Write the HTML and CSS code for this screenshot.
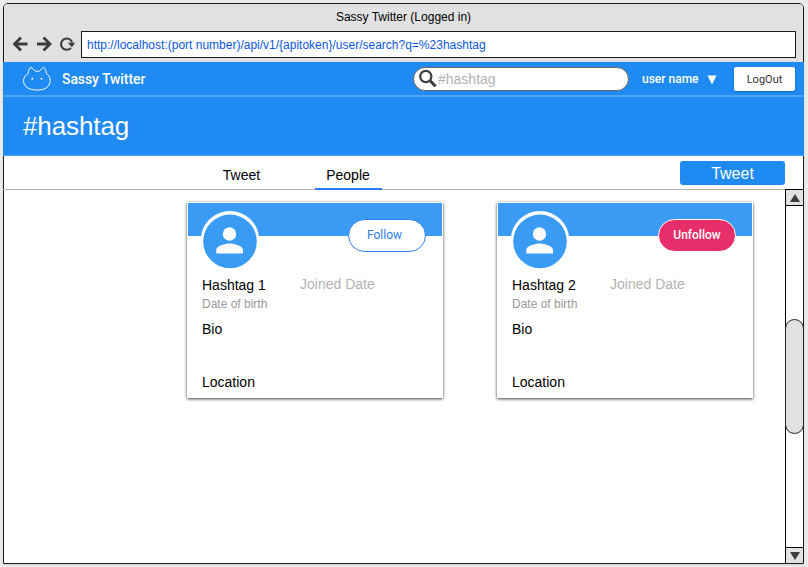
FILE: index.html
```html
<!DOCTYPE html>
<html lang="en">
<head>
<meta charset="utf-8">
<title>Sassy Twitter</title>
<link rel="stylesheet" href="styles.css">
</head>
<body>
<div class="window">
  <div class="chrome">
    <div class="title">Sassy Twitter (Logged in)</div>
    <div class="toolbar">
      <svg class="nav" width="66" height="20" viewBox="0 0 66 20" fill="none" stroke="#3d3d3d">
        <path d="M2 10H15.500M9 3.500L2.500 10l6.500 6.500" stroke-width="2.800"/>
        <path d="M25 10h13.500M31.500 3.500L38 10l-6.500 6.500" stroke-width="2.800"/>
        <path d="M59 13.900A5.700 5.700 0 1 1 60.200 8.500" stroke-width="2"/>
        <path d="M55.800 8.800h7.400l-3.300 4.400z" fill="#3d3d3d" stroke="none"/>
      </svg>
      <div class="address"><span>http://localhost:(port number)/api/v1/{apitoken}/user/search?q=%23hashtag</span></div>
    </div>
  </div>
  <header class="header">
    <svg class="logo" width="30" height="26" viewBox="0 0 30 26">
      <path d="M6.200 7.500C6.500 4.500 7.600 1.600 9 1.500c1.400 0 2.700 2.500 4.200 3.700h4.300c1.500-1.200 2.700-3.700 4.100-3.700 1.400.1 2.400 2.900 2.700 6C27 9.200 28.200 11.800 28.200 14.500c0 6.300-5.200 9.600-13.100 9.600S1.500 20.800 1.500 14.500c0-2.700 2-5.300 4.700-7z" fill="none" stroke="#fff" stroke-width="1"/>
      <circle cx="10.300" cy="12.700" r="1" fill="#fff"/><circle cx="19.500" cy="12.700" r="1" fill="#fff"/>
    </svg>
    <span class="brand">Sassy Twitter</span>
    <div class="search">
      <svg width="20" height="20" viewBox="0 0 20 20" fill="none" stroke="#3d3d3d"><circle cx="7.800" cy="7.500" r="5.600" stroke-width="2.200"/><path d="M11.800 11.500l5.800 5.800" stroke-width="3"/></svg>
      <span class="query">#hashtag</span>
    </div>
    <span class="user">user name</span>
    <svg class="caret" width="10" height="10" viewBox="0 0 10 10"><path d="M.5 .5h9L5 9.500z" fill="#fff"/></svg>
    <button class="logout">LogOut</button>
  </header>
  <div class="banner"><h1>#hashtag</h1></div>
  <nav class="tabs">
    <a class="tab tab-first">Tweet</a>
    <a class="tab tab-active">People</a>
    <button class="tweet">Tweet</button>
  </nav>
  <div class="content">
    <main class="cards">
      <article class="card">
        <div class="cover">
          <svg class="avatar" width="58" height="59" viewBox="0 0 58 59"><circle cx="29" cy="29.300" r="29.300" fill="#fff"/><circle cx="29" cy="30.400" r="26.800" fill="#3a9bf4"/><circle cx="28.500" cy="23" r="6.700" fill="#fafafa"/><path d="M15.200 42.500v-3.200c0-4.500 8.900-6.700 13.400-6.700s13.400 2.200 13.400 6.700v3.200z" fill="#fafafa"/></svg>
          <button class="follow">Follow</button>
        </div>
        <div class="names"><span class="name">Hashtag 1</span><span class="joined">Joined Date</span></div>
        <div class="birth">Date of birth</div>
        <div class="bio">Bio</div>
        <div class="location">Location</div>
      </article>
      <article class="card">
        <div class="cover">
          <svg class="avatar" width="58" height="59" viewBox="0 0 58 59"><circle cx="29" cy="29.300" r="29.300" fill="#fff"/><circle cx="29" cy="30.400" r="26.800" fill="#3a9bf4"/><circle cx="28.500" cy="23" r="6.700" fill="#fafafa"/><path d="M15.200 42.500v-3.200c0-4.500 8.900-6.700 13.400-6.700s13.400 2.200 13.400 6.700v3.200z" fill="#fafafa"/></svg>
          <button class="follow unfollow">Unfollow</button>
        </div>
        <div class="names"><span class="name">Hashtag 2</span><span class="joined">Joined Date</span></div>
        <div class="birth">Date of birth</div>
        <div class="bio">Bio</div>
        <div class="location">Location</div>
      </article>
    </main>
    <div class="scrollbar">
      <div class="arrow arrow-up"><svg width="10" height="8" viewBox="0 0 10 8"><path d="M5 0l5 8H0z" fill="#3d3d3d"/></svg></div>
      <div class="thumb"></div>
      <div class="arrow arrow-down"><svg width="10" height="8" viewBox="0 0 10 8"><path d="M5 8L0 0h10z" fill="#3d3d3d"/></svg></div>
    </div>
  </div>
</div>
</body>
</html>
```
FILE: styles.css
```css
* { box-sizing: border-box; }
body {
  margin: 0;
  padding: 3px;
  height: 567px;
  overflow: hidden;
  background: #ebebeb;
  font-family: "Liberation Sans", Helvetica, sans-serif;
  color: #000;
}
button { padding: 0; border: 0; font: inherit; white-space: nowrap; }
span, a, h1 { white-space: nowrap; }
.window {
  width: 801px;
  height: 561px;
  border: 1px solid #1c1c1c;
  border-radius: 5px 5px 0 0;
  background: #fff;
  box-shadow: 0 1px 2px rgba(0, 0, 0, .12);
}
.chrome { height: 58px; background: #e1e1e1; border-radius: 4px 4px 0 0; }
.title { height: 27px; line-height: 26px; font-size: 12px; text-align: center; }
.toolbar { display: flex; }
.nav { margin: 3px 3px 0 8px; }
.address {
  flex: none;
  width: 715px;
  height: 27px;
  padding-left: 5px;
  border: 1px solid #1c1c1c;
  background: #fff;
  color: #0b57e0;
  font-size: 12px;
  line-height: 26px;
}
.header {
  display: flex;
  align-items: center;
  height: 35px;
  margin: 0 -1px;
  padding: 0 9px 1px 19px;
  border-bottom: 2px solid #4ba4f5;
  background: #1e8af2;
  color: #fff;
  font-family: Roboto, sans-serif;
}
.logo { flex: none; margin-top: 2px; }
.brand { width: 361px; padding: 2px 0 0 10px; font-size: 14px; font-weight: 500; letter-spacing: -.08px; }
.search {
  display: flex;
  align-items: center;
  flex: none;
  width: 216px;
  height: 24px;
  margin: 1px 13px 0 0;
  padding-left: 4px;
  border: 1px solid #666;
  border-radius: 12px;
  background: #fff;
}
.query { color: #b3b3b3; font: 14px "Liberation Sans", sans-serif; }
.user { width: 65px; padding-top: 2px; font-size: 12px; font-weight: 500; }
.caret { flex: none; margin: 3px 17px 0 0; }
.logout {
  flex: none;
  width: 61px;
  height: 24px;
  margin-top: 2px;
  border-radius: 2px;
  background: #fff;
  box-shadow: 0 1px 2px rgba(0, 0, 0, .25);
  color: #333;
  font-size: 11px;
}
.banner { height: 59px; margin: 0 -1px; border-bottom: 1px solid #4ba4f5; background: #1e8af2; color: #fff; }
h1 { margin: 0; padding-left: 20px; font-size: 26px; font-weight: 400; line-height: 58px; letter-spacing: -.1px; }
.tabs { display: flex; height: 34px; margin-left: -1px; border-bottom: 1px solid #b3b3b3; font-size: 14px; }
.tab { height: 34px; line-height: 38px; text-align: center; }
.tab-first { width: 67px; margin-left: 205px; }
.tab-active { width: 67px; margin-left: 40px; padding-right: 1px; border-bottom: 2px solid #2f7df6; }
.tweet { width: 105px; height: 24px; margin: 5px 0 0 298px; border-radius: 3px; background: #1e8af2; color: #fff; font-size: 16px; line-height: 25px; }
.content { display: flex; justify-content: space-between; height: 374px; margin-top: -1px; }
.cards { display: flex; gap: 54px; padding: 13px 0 0 183px; }
.card {
  width: 256px;
  height: 196px;
  padding: 1px;
  background: #fff;
  box-shadow: 0 1px 3px rgba(0, 0, 0, .75);
  font-size: 14px;
  line-height: 16px;
}
.cover { display: flex; height: 33px; margin-bottom: 41px; background: #3a9bf4; }
.avatar { flex: none; margin: 8px 89px 0 13px; overflow: visible; }
.follow {
  flex: none;
  width: 78px;
  height: 33px;
  margin-top: 16px;
  padding: 0 5px 2px 0;
  border: 1px solid #2f7df6;
  border-radius: 17px;
  background: #fff;
  color: #2f7df6;
  font: 12px Roboto, sans-serif;
}
.unfollow { padding: 0 0 2px; border-color: #fff; background: #e62e6b; color: #fff; font-weight: 500; }
.names { display: flex; padding-left: 14px; }
.name { width: 98px; }
.joined { margin-top: -1px; color: #b3b3b3; }
.birth { margin-top: 4px; padding-left: 14px; color: #999; font-size: 12px; line-height: 14px; }
.bio { margin-top: 10px; padding-left: 14px; }
.location { margin-top: 37px; padding-left: 14px; }
.scrollbar { display: flex; flex-direction: column; justify-content: space-between; width: 18px; border-left: 1px solid #000; border-top: 1px solid #000; }
.arrow { display: flex; align-items: center; justify-content: center; height: 16px; background: #e1e1e1; }
.arrow-up { border-bottom: 1px solid #000; }
.arrow-down { border-top: 1px solid #000; }
.thumb { width: 19px; height: 115px; margin-left: -1px; border: 1px solid #222; border-radius: 10px; background: #e1e1e1; }
```
